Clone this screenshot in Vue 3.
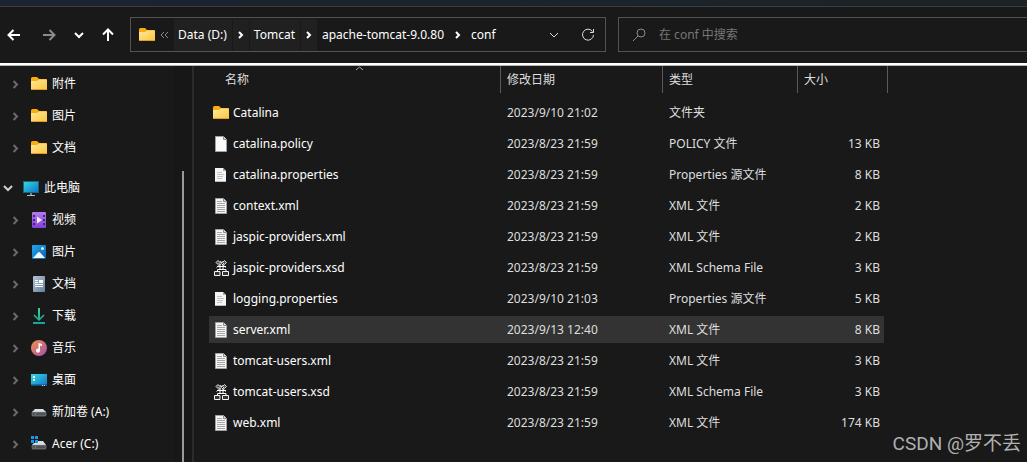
<script setup>
import { ref } from 'vue'

const query = ref('')
const crumbs = ['Data (D:)', 'Tomcat', 'apache-tomcat-9.0.80', 'conf']

const quickAccess = [
  { name: '附件', icon: 'folder' },
  { name: '图片', icon: 'folder' },
  { name: '文档', icon: 'folder' },
]
const devices = [
  { name: '视频', icon: 'video' },
  { name: '图片', icon: 'picture' },
  { name: '文档', icon: 'document' },
  { name: '下载', icon: 'download' },
  { name: '音乐', icon: 'music' },
  { name: '桌面', icon: 'desktop' },
  { name: '新加卷 (A:)', icon: 'drive' },
  { name: 'Acer (C:)', icon: 'system' },
]
const files = [
  { name: 'Catalina', icon: 'folder', date: '2023/9/10 21:02', type: '文件夹', size: '' },
  { name: 'catalina.policy', icon: 'blank', date: '2023/8/23 21:59', type: 'POLICY 文件', size: '13 KB' },
  { name: 'catalina.properties', icon: 'props', date: '2023/8/23 21:59', type: 'Properties 源文件', size: '8 KB' },
  { name: 'context.xml', icon: 'xml', date: '2023/8/23 21:59', type: 'XML 文件', size: '2 KB' },
  { name: 'jaspic-providers.xml', icon: 'xml', date: '2023/8/23 21:59', type: 'XML 文件', size: '2 KB' },
  { name: 'jaspic-providers.xsd', icon: 'xsd', date: '2023/8/23 21:59', type: 'XML Schema File', size: '3 KB' },
  { name: 'logging.properties', icon: 'props', date: '2023/9/10 21:03', type: 'Properties 源文件', size: '5 KB' },
  { name: 'server.xml', icon: 'xml', date: '2023/9/13 12:40', type: 'XML 文件', size: '8 KB' },
  { name: 'tomcat-users.xml', icon: 'xml', date: '2023/8/23 21:59', type: 'XML 文件', size: '3 KB' },
  { name: 'tomcat-users.xsd', icon: 'xsd', date: '2023/8/23 21:59', type: 'XML Schema File', size: '3 KB' },
  { name: 'web.xml', icon: 'xml', date: '2023/8/23 21:59', type: 'XML 文件', size: '174 KB' },
]
const selected = ref('server.xml')
</script>

<template>
  <div class="explorer">
    <svg class="defs" aria-hidden="true">
      <defs>
        <linearGradient id="g-folder" x1="0" y1="0" x2="1" y2="1"><stop offset="0" stop-color="#ffe8a0" /><stop offset="1" stop-color="#fcc63a" /></linearGradient>
        <linearGradient id="g-screen" x1="0" y1="0" x2="1" y2="1"><stop offset="0" stop-color="#35dbe0" /><stop offset="1" stop-color="#0f72c9" /></linearGradient>
        <linearGradient id="g-video" x1="0" y1="0" x2="0" y2="1"><stop offset="0" stop-color="#b57bee" /><stop offset="1" stop-color="#8240d6" /></linearGradient>
        <linearGradient id="g-pic" x1="0" y1="0" x2="1" y2="1"><stop offset="0" stop-color="#24a8ea" /><stop offset="1" stop-color="#0560b4" /></linearGradient>
        <linearGradient id="g-doc" x1="0" y1="0" x2="1" y2="1"><stop offset="0" stop-color="#b4c4d4" /><stop offset="1" stop-color="#66809c" /></linearGradient>
        <linearGradient id="g-down" x1="0" y1="0" x2="0" y2="1"><stop offset="0" stop-color="#38d48c" /><stop offset="1" stop-color="#16a59a" /></linearGradient>
        <linearGradient id="g-music" x1="0" y1="0" x2="1" y2="1"><stop offset="0" stop-color="#f29250" /><stop offset="1" stop-color="#a44fa6" /></linearGradient>
        <symbol id="i-folder" viewBox="0 0 16 16">
          <path d="M0 2.500Q0 1 1.500 1H6L8 3H15Q16 3 16 4V8H0Z" fill="#f5ae0c" />
          <path d="M0 5H6L8 3.500H15.500L16 4V13.500H0Z" fill="url(#g-folder)" />
          <path d="M0 13.500H16" stroke="#dca02c" />
        </symbol>
        <symbol id="i-pc" viewBox="0 0 16 16">
          <rect x="0.500" y="1.500" width="15" height="11" fill="url(#g-screen)" stroke="#17677f" />
          <path d="M7 13H9V15H7Z" fill="#6d8794" /><path d="M4 15.500H12" stroke="#b7c1c7" />
        </symbol>
        <symbol id="i-video" viewBox="0 0 16 16">
          <rect x="1" y="0" width="14" height="16" rx="1" fill="url(#g-video)" />
          <path d="M2 3h2v2H2zM2 7h2v2H2zM2 11h2v2H2zM12 3h2v2h-2zM12 7h2v2h-2zM12 11h2v2h-2z" fill="#432476" />
          <path d="M6 4.500L11 8L6 11.500Z" fill="#f6efff" />
        </symbol>
        <symbol id="i-picture" viewBox="0 0 16 16">
          <rect x="1" y="1" width="14" height="14" rx="1" fill="url(#g-pic)" />
          <circle cx="11.500" cy="4.500" r="1.500" fill="#d8f2ff" />
          <path d="M2 14L7 8.500Q8 7.500 9 8.500L14 14Z" fill="#f4faff" />
        </symbol>
        <symbol id="i-document" viewBox="0 0 16 16">
          <rect x="2" y="0" width="12" height="16" rx="1" fill="url(#g-doc)" />
          <path d="M4 4.500H7M4 6.500H7M4 8.500H12M4 10.500H12" stroke="#fff" />
          <rect x="8" y="4" width="4" height="3" fill="#fff" />
        </symbol>
        <symbol id="i-download" viewBox="0 0 16 16">
          <path d="M7 0H9V10L12.500 6.500L13.500 7.500L8 13L2.500 7.500L3.500 6.500L7 10ZM2 14H14V16H2Z" fill="url(#g-down)" />
        </symbol>
        <symbol id="i-music" viewBox="0 0 16 16">
          <circle cx="8" cy="8" r="8" fill="url(#g-music)" />
          <path d="M7.500 3L11 4V6L9 5.500V10.500A2 2 0 1 1 7.500 8.700Z" fill="#fff" />
        </symbol>
        <symbol id="i-desktop" viewBox="0 0 16 16">
          <rect x="0" y="2" width="16" height="12" fill="url(#g-screen)" />
          <path d="M0 12.500H16V14H0Z" fill="#0c4d7a" />
          <path d="M2 4h2v2H2zM2 7h2v2H2z" fill="#fff" /><path d="M11 13h1v1h-1zM13 13h1v1h-1z" fill="#bfe8f8" />
        </symbol>
        <symbol id="i-drive" viewBox="0 0 16 16">
          <path d="M4 5H12L15 8H1Z" fill="#dcdde2" />
          <rect x="1" y="8" width="14" height="4" rx="1" fill="#505156" stroke="#a3a4a8" stroke-width="0.500" />
          <path d="M4 10h1" stroke="#38d86c" />
        </symbol>
        <symbol id="i-system" viewBox="0 0 16 16">
          <path d="M5 5H12L15 9H1Z" fill="#dcdde2" />
          <rect x="1" y="9" width="14" height="4" rx="1" fill="#505156" stroke="#a3a4a8" stroke-width="0.500" />
          <path d="M4 11h1" stroke="#38d86c" />
          <path d="M0 0h7v7H0z" fill="#1a1a1a" />
          <path d="M0 0h3v3H0zM4 0h3v3H4zM0 4h3v3H0zM4 4h3v3H4z" fill="#1b96e6" />
        </symbol>
        <symbol id="i-blank" viewBox="0 0 16 16">
          <path d="M2.500 0.500H10.500L13.500 3.500V15.500H2.500Z" fill="#fafafa" stroke="#a2a2a2" />
          <path d="M10.500 0.500V3.500H13.500" fill="#ddd" stroke="#8a8a8a" />
        </symbol>
        <symbol id="i-props" viewBox="0 0 16 16">
          <path d="M2 1H10L13 4V15H2Z" fill="#f5f5f5" />
          <path d="M10 1V4H13Z" fill="#a8a8a8" />
          <path d="M2 14.500H13" stroke="#bbb" />
          <path d="M4 5.500H9M4 7.500H11M4 9.500H10M4 11.500H9" stroke="#bcc3ca" />
        </symbol>
        <symbol id="i-xml" viewBox="0 0 16 16">
          <path d="M2.500 0.500H10.500L13.500 3.500V15.500H2.500Z" fill="#f4f4f4" stroke="#a2a2a2" />
          <path d="M10.500 0.500V3.500H13.500" fill="#ddd" stroke="#8a8a8a" />
          <path d="M4 3.500H9M4 5.500H12M4 7.500H12M4 9.500H12M4 11.500H12M4 13.500H12" stroke="#a8a8a8" />
        </symbol>
        <symbol id="i-xsd" viewBox="0 0 16 16">
          <g fill="none" stroke="#e0e0e0">
            <path d="M5 0.500L3 2.500L5 4.500L7 2.500ZM11.500 0.500L9.500 2.500L11.500 4.500L13.500 2.500Z" fill="#555" />
            <path d="M7 1L8.200 3L9.500 1M3.500 7.500L8.200 3.500L13 7.500" />
            <path d="M4 6.500H13M7 4V10M10 4V10M4.500 11V9.500H13V11M5 9.500H12" stroke="#fff" />
            <path d="M1.500 11.500H7V15.500H1.500ZM9.500 11.500H15.500V15.500H9.500Z" fill="#343434" stroke="#f4f4f4" />
          </g>
        </symbol>
        <symbol id="i-chevron" viewBox="0 0 16 16"><path d="M5.500 5L9 8.500L5.500 12" fill="none" stroke="currentColor" stroke-width="2" /></symbol>
      </defs>
    </svg>

    <div class="titlebar"></div>
    <header class="toolbar">
      <nav class="moves" aria-label="导航">
        <button type="button" aria-label="后退"><svg viewBox="0 0 16 16"><path d="M14 8H2.500M7.500 3L2.500 8L7.500 13" /></svg></button>
        <button type="button" aria-label="前进" disabled><svg viewBox="0 0 16 16"><path d="M2 8H13.500M8.500 3L13.500 8L8.500 13" /></svg></button>
        <button type="button" class="recent" aria-label="最近的位置"><svg viewBox="0 0 16 16"><path d="M4 6L8 10L12 6" /></svg></button>
        <button type="button" class="up" aria-label="上移"><svg viewBox="0 0 16 16"><path d="M8 14V2.500M3 7.500L8 2.500L13 7.500" /></svg></button>
      </nav>
      <div class="address">
        <svg class="icon"><use href="#i-folder" /></svg>
        <button type="button" class="more" aria-label="更多"><svg viewBox="0 0 9 8"><path d="M4 1L1 4L4 7M8 1L5 4L8 7" /></svg></button>
        <template v-for="(crumb, i) in crumbs" :key="crumb">
          <a href="#" class="crumb" :class="{ lit: i < 2 }">{{ crumb }}</a>
          <button v-if="i < crumbs.length - 1" type="button" class="step" :class="{ lit: i < 2 }" :aria-label="crumb + ' 子文件夹'">
            <svg viewBox="0 0 6 8"><path d="M1 1L4 4L1 7" /></svg>
          </button>
        </template>
        <span class="fill"></span>
        <button type="button" class="tool" aria-label="历史记录"><svg viewBox="0 0 16 16"><path d="M4 6L8 10L12 6" /></svg></button>
        <button type="button" class="tool" aria-label="刷新"><svg viewBox="0 0 16 16"><path d="M12.500 4.500A5.500 5.500 0 1 0 13.500 8M13.500 2V5.500H10" /></svg></button>
      </div>
      <label class="search">
        <svg viewBox="0 0 16 16" aria-hidden="true"><circle cx="9" cy="6" r="4" /><path d="M6 9L1 14" /></svg>
        <input v-model="query" type="text" placeholder="在 conf 中搜索" aria-label="在 conf 中搜索" />
      </label>
    </header>

    <div class="body">
      <aside class="side">
        <nav class="tree" aria-label="文件夹">
          <ul>
            <li v-for="item in quickAccess" :key="item.name">
              <button type="button" class="twist" :aria-label="'展开 ' + item.name"><svg class="icon"><use href="#i-chevron" /></svg></button>
              <a href="#"><svg class="icon"><use :href="'#i-' + item.icon" /></svg>{{ item.name }}</a>
            </li>
          </ul>
          <ul>
            <li class="root">
              <button type="button" class="twist" aria-label="折叠 此电脑"><svg class="icon" viewBox="0 0 16 16"><path d="M4 6L8 10L12 6" fill="none" stroke="currentColor" stroke-width="2" /></svg></button>
              <a href="#"><svg class="icon"><use href="#i-pc" /></svg>此电脑</a>
            </li>
            <li v-for="item in devices" :key="item.name">
              <button type="button" class="twist" :aria-label="'展开 ' + item.name"><svg class="icon"><use href="#i-chevron" /></svg></button>
              <a href="#"><svg class="icon"><use :href="'#i-' + item.icon" /></svg>{{ item.name }}</a>
            </li>
          </ul>
        </nav>
        <div class="scroll"><span class="thumb"></span></div>
      </aside>

      <main class="list">
        <table>
          <colgroup><col class="c-name" /><col class="c-date" /><col class="c-type" /><col class="c-size" /><col class="c-end" /></colgroup>
          <thead>
            <tr>
              <th scope="col" aria-sort="ascending"><svg class="sort" viewBox="0 0 9 5"><path d="M1 4L4.500 1L8 4" /></svg>名称</th>
              <th scope="col">修改日期</th>
              <th scope="col">类型</th>
              <th scope="col">大小</th>
              <td class="end"></td>
            </tr>
          </thead>
          <tbody>
            <tr v-for="file in files" :key="file.name" :class="{ selected: file.name === selected }" @click="selected = file.name">
              <td><span class="file"><svg class="icon"><use :href="'#i-' + file.icon" /></svg>{{ file.name }}</span></td>
              <td>{{ file.date }}</td>
              <td>{{ file.type }}</td>
              <td class="size">{{ file.size }}</td>
              <td class="end"></td>
            </tr>
          </tbody>
        </table>
      </main>
    </div>
    <div class="watermark">CSDN @罗不丢</div>
  </div>
</template>

<style>
body { background: #191919; }
</style>

<style scoped>
.explorer { position: relative; display: flex; flex-direction: column; height: 100vh; overflow: hidden; background: #191919; color: #fff; font: 12px/16px "Noto Sans", "Noto Sans CJK SC", sans-serif; }
.defs { position: absolute; width: 0; height: 0; }
button { display: flex; align-items: center; justify-content: center; padding: 0; border: 0; background: none; color: inherit; font: inherit; }
a { color: inherit; text-decoration: none; }
.icon { display: block; flex: none; width: 16px; height: 16px; }

.titlebar { flex: none; height: 6px; background: linear-gradient(90deg, #1b2430, #1b2326); border-bottom: 1px solid #3c3c3c; }
.toolbar { flex: none; display: flex; align-items: flex-start; height: 46px; padding-top: 10px; border-bottom: 2px solid #fff; }
.toolbar svg { fill: none; stroke: currentColor; }
.moves { flex: none; display: flex; align-items: center; height: 35px; padding: 0 14px 0 6px; }
.moves button { flex: none; width: 35px; height: 35px; justify-content: flex-start; }
.moves button svg { width: 16px; height: 16px; stroke-width: 2; }
.moves button:disabled { color: #8c8c8c; width: 30px; }
.moves .recent { width: 29px; }
.moves .up { width: 16px; }
.address { flex: 466 1 0; box-sizing: border-box; display: flex; align-items: center; height: 35px; padding-left: 8px; border: 1px solid #535353; }
.address .icon { stroke: none; }
.more { width: 19px; height: 32px; color: #888; }
.more svg { width: 9px; height: 8px; }
.crumb { padding: 0 5px 0 4px; line-height: 32px; white-space: nowrap; }
.step { width: 16px; height: 32px; margin: 0 1px; }
.step svg { width: 6px; height: 8px; stroke-width: 2; }
.lit { background: #202020; }
.fill { flex: 1; }
.tool { width: 34px; height: 32px; color: #ddd; }
.tool svg { width: 16px; height: 16px; }
.search { flex: 395 1 0; box-sizing: border-box; display: flex; align-items: center; gap: 11px; height: 35px; margin-left: 12px; padding-left: 13px; border: 1px solid #535353; border-right: 0; color: #8a8a8a; }
.search svg { flex: none; width: 16px; height: 16px; }
.search input { flex: 1; min-width: 0; padding: 0; border: 0; outline: 0; background: none; color: #fff; font: inherit; }
.search input::placeholder { color: #777; opacity: 1; }

.body { flex: 1; min-height: 0; display: flex; border-top: 1px solid #b8b8b8; }
.side { flex: none; display: flex; width: 192px; border-right: 2px solid #2b2b2b; overflow: hidden; }
.tree { flex: 1; padding-top: 2px; }
.tree ul { margin: 0 0 8px; padding: 0; list-style: none; }
.tree li { display: flex; align-items: center; height: 32px; padding-left: 8px; }
.tree li.root { padding-left: 0; }
.tree a { display: flex; align-items: center; gap: 5px; margin-left: 7px; white-space: nowrap; }
.twist { color: #6c6c6c; }
.root .twist { color: #d0d0d0; }
.scroll { display: flex; width: 18px; background: #171717; }
.thumb { width: 2px; margin: 105px 0 0 8px; background: #9a9a9a; }

.list { flex: 1; min-width: 0; padding-left: 15px; overflow: hidden; }
table { table-layout: fixed; width: 679px; border-collapse: separate; border-spacing: 0; }
.c-name { width: 291px; }
.c-date { width: 162px; }
.c-type { width: 135px; }
.c-size { width: 87px; }
.c-end { width: 4px; }
th { position: relative; height: 27px; padding: 0 6px; border-left: 1px solid #5a5a5a; color: #dedede; font-weight: 400; text-align: left; }
th:first-child { padding-left: 16px; border-left: 0; }
thead .end { border-right: 1px solid #5a5a5a; }
.sort { position: absolute; top: 0; left: 50%; width: 9px; height: 5px; fill: none; stroke: #aaa; }
td { height: 27px; padding: 0 4px 0 7px; border-bottom: 4px solid transparent; background-clip: padding-box; color: #dedede; white-space: nowrap; }
thead td { height: 27px; padding: 0; border-bottom: 0; }
tbody td.end { padding: 0; }
tbody::before { content: ""; display: block; height: 6px; }
td:first-child { padding-left: 4px; color: #fff; }
.file { display: flex; align-items: center; gap: 4px; }
.size { text-align: right; }
.selected td:not(.end) { background-color: #333; }
.watermark { position: absolute; right: 6px; bottom: 6px; color: #b0b0b0; font: 19px/24px Roboto, "Noto Sans CJK SC", sans-serif; }
</style>
